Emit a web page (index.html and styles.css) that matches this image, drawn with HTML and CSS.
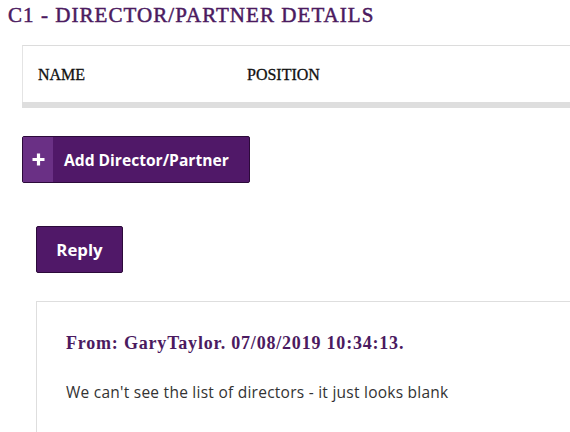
FILE: index.html
```html
<!DOCTYPE html>
<html>
<head>
<meta charset="utf-8">
<link rel="stylesheet" href="styles.css">
</head>
<body>
<h1 class="title">C1 - DIRECTOR/PARTNER DETAILS</h1>
<div class="card">
  <div class="table-head">
    <div class="col col-name">NAME</div>
    <div class="col col-pos">POSITION</div>
  </div>
</div>
<button class="add-btn">
  <span class="add-icon"><svg width="13" height="13" viewBox="0 0 13 13"><path d="M6.5 0.5V12.5M0.5 6.5H12.5" stroke="#fff" stroke-width="3.2"/></svg></span>
  <span class="add-label">Add Director/Partner</span>
</button>
<button class="reply-btn">Reply</button>
<div class="comment">
  <div class="comment-from">From: GaryTaylor. 07/08/2019 10:34:13.</div>
  <div class="comment-body">We can't see the list of directors - it just looks blank</div>
</div>
</body>
</html>
```
FILE: styles.css
```css
html, body {
  margin: 0;
  padding: 0;
  background: #fff;
  overflow: hidden;
}
body {
  font-family: "Liberation Serif", serif;
}
.title {
  margin: 3px 0 0 8px;
  font-family: "Liberation Serif", serif;
  font-weight: normal;
  font-size: 21px;
  line-height: 24px;
  color: #4b1a60;
  letter-spacing: 1.05px;
  -webkit-text-stroke: 0.5px #4b1a60;
}
.card {
  margin: 18px 0 0 22px;
  height: 56px;
  border-top: 1px solid #dcdcdc;
  border-left: 1px solid #e4e4e4;
  background: #fff;
  box-shadow: 0 6px 0 #dedede;
}
.table-head {
  display: flex;
  padding: 20px 0 0 15px;
}
.col {
  font-family: "Liberation Serif", serif;
  font-size: 16px;
  line-height: 18px;
  color: #111;
  -webkit-text-stroke: 0.3px #111;
}
.col-name {
  width: 209px;
}
.add-btn {
  display: flex;
  align-items: stretch;
  margin: 34px 0 0 22px;
  padding: 0;
  width: 228px;
  height: 47px;
  background: #501868;
  border: 1px solid #2c0a3a;
  border-radius: 2px;
  cursor: pointer;
}
.add-icon {
  width: 30px;
  display: flex;
  align-items: center;
  justify-content: center;
  background: #6a3085;
}
.add-label {
  display: flex;
  align-items: center;
  padding-left: 11px;
  font-family: "Open Sans", sans-serif;
  font-weight: bold;
  font-size: 15.6px;
  color: #fff;
}
.reply-btn {
  display: block;
  margin: 43px 0 0 36px;
  padding: 0;
  width: 87px;
  height: 47px;
  background: #501868;
  border: 1px solid #2c0a3a;
  border-radius: 2px;
  font-family: "Open Sans", sans-serif;
  font-weight: bold;
  font-size: 16.8px;
  color: #fff;
  cursor: pointer;
}
.comment {
  margin: 28px 0 0 36px;
  height: 102px;
  border-top: 1px solid #dedede;
  border-left: 1px solid #dedede;
  padding: 30px 0 0 29px;
}
.comment-from {
  font-family: "Liberation Serif", serif;
  font-weight: bold;
  font-size: 18px;
  line-height: 22px;
  letter-spacing: 0.8px;
  color: #4b1a60;
}
.comment-body {
  margin-top: 28px;
  font-family: "Open Sans", sans-serif;
  font-size: 15.5px;
  line-height: 20px;
  letter-spacing: 0.25px;
  color: #333;
}
```
